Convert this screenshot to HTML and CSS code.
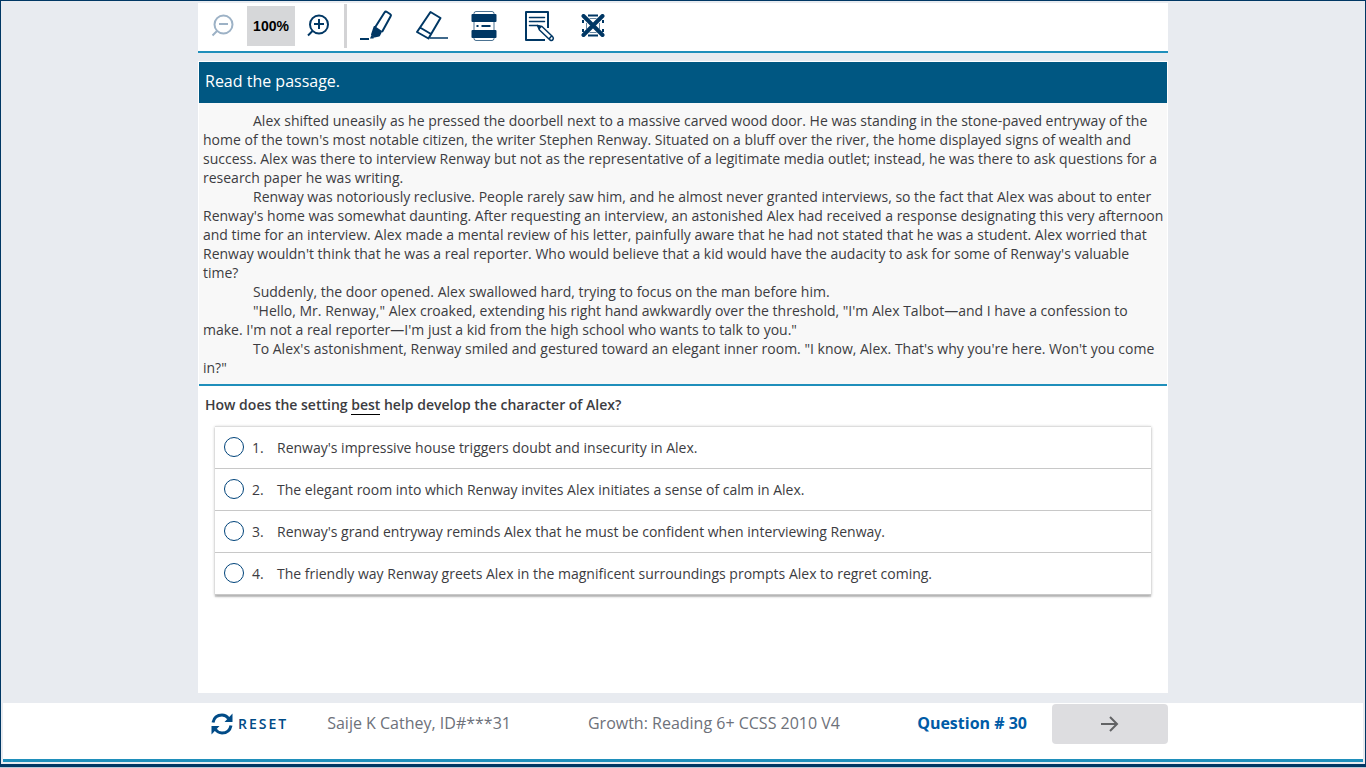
FILE: index.html
```html
<!DOCTYPE html>
<html lang="en">
<head>
<meta charset="utf-8">
<meta name="viewport" content="width=device-width, initial-scale=1">
<title>Growth: Reading 6+ CCSS 2010 V4</title>
<link rel="stylesheet" href="styles.css">
</head>
<body>
<div class="frame">
  <header class="toolbar column">
    <button class="tool zoom-out" type="button" aria-label="Zoom out" disabled>
      <svg width="24" height="24" viewBox="0 0 24 24" fill="none" stroke="currentColor" stroke-width="2"><circle cx="13.500" cy="10.500" r="9"/><path d="M9 10h9M7 17L2.500 21.500"/></svg>
    </button>
    <output class="zoom-level">100%</output>
    <button class="tool zoom-in" type="button" aria-label="Zoom in">
      <svg width="24" height="24" viewBox="0 0 24 24" fill="none" stroke="currentColor" stroke-width="2"><circle cx="13" cy="10.500" r="9"/><path d="M8 10h10M13 5v10M6.500 17L2 21.500"/></svg>
    </button>
    <span class="divider"></span>
    <button class="tool tool-wide" type="button" aria-label="Highlighter">
      <svg width="34" height="32" viewBox="0 0 34 32" fill="none" stroke="currentColor" stroke-width="2" stroke-linejoin="round"><path d="M16 17.500L25.500 2.500Q26.500 1 28 2l3 2q1.500 1 .5 2.500L23 22"/><path d="M15.500 17l6.500 4.500-2 4-4.500 1-2.500-2z" fill="currentColor"/><path d="M12.500 25l2.500 2-.5 1.500h-3.500z" fill="currentColor" stroke="none"/><path d="M1 29h9"/></svg>
    </button>
    <button class="tool tool-wide" type="button" aria-label="Eraser">
      <svg width="34" height="32" viewBox="0 0 34 32" fill="none" stroke="currentColor" stroke-width="2" stroke-linejoin="round"><path d="M15.500 2l10 6L13.500 28.500 2 22zM5 17.500l11 6.500"/><path d="M15 28h18" stroke-width="1.500"/></svg>
    </button>
    <button class="tool tool-guide" type="button" aria-label="Line reader">
      <svg width="26" height="32" viewBox="0 0 26 32"><rect x="3" y="1.500" width="20" height="29" rx="2" fill="none" stroke="currentColor" opacity=".7"/><rect x="0.500" y="4" width="25" height="8" rx="1" fill="currentColor"/><rect x="0.500" y="20" width="25" height="8" rx="1" fill="currentColor"/><path d="M10.500 16h9M5.500 16h2" stroke="currentColor" stroke-width="2"/></svg>
    </button>
    <button class="tool tool-notes" type="button" aria-label="Notepad">
      <svg width="32" height="32" viewBox="0 0 32 32" fill="none" stroke="currentColor" stroke-width="2" stroke-linejoin="round"><path d="M25 18V2H3v28h19"/><path d="M6.500 7.500h15M6.500 11.500h15M6.500 15.500h8" stroke-width="1.500" stroke-linecap="round"/><path d="M14.500 15.500l4.500 1 10.500 10q1.500 1.500.5 3t-3 .5L16.500 20zM26 29l3-3.500" stroke-width="1.500"/><path d="M14 15l5 1.500-3 3.500z" fill="currentColor" stroke="none"/></svg>
    </button>
    <button class="tool" type="button" aria-label="Answer eliminator">
      <svg width="24" height="24" viewBox="0 0 24 24" fill="none" stroke="currentColor"><path d="M7 1.500h10M7 21.500h10M2 6v3M2 15v3M22 6v3M22 15v3" stroke-width="2"/><path d="M8.500 4.500h7M8.500 18.500h7M5.500 9v6M18.500 9v6" opacity=".6"/><path d="M2.500 2l19 19M21.500 2l-19 19" stroke-width="4" stroke-linecap="round"/></svg>
    </button>
  </header>

  <main class="panel column">
    <h1 class="panel-title">Read the passage.</h1>
    <article class="passage">
      <p>Alex shifted uneasily as he pressed the doorbell next to a massive carved wood door. He was standing in the stone-paved entryway of the home of the town's most notable citizen, the writer Stephen Renway. Situated on a bluff over the river, the home displayed signs of wealth and success. Alex was there to interview Renway but not as the representative of a legitimate media outlet; instead, he was there to ask questions for a research paper he was writing.</p>
      <p>Renway was notoriously reclusive. People rarely saw him, and he almost never granted interviews, so the fact that Alex was about to enter Renway's home was somewhat daunting. After requesting an interview, an astonished Alex had received a response designating this very afternoon and time for an interview. Alex made a mental review of his letter, painfully aware that he had not stated that he was a student. Alex worried that Renway wouldn't think that he was a real reporter. Who would believe that a kid would have the audacity to ask for some of Renway's valuable time?</p>
      <p>Suddenly, the door opened. Alex swallowed hard, trying to focus on the man before him.</p>
      <p>"Hello, Mr. Renway," Alex croaked, extending his right hand awkwardly over the threshold, "I'm Alex Talbot—and I have a confession to make. I'm not a real reporter—I'm just a kid from the high school who wants to talk to you."</p>
      <p>To Alex's astonishment, Renway smiled and gestured toward an elegant inner room. "I know, Alex. That's why you're here. Won't you come in?"</p>
    </article>
    <fieldset class="question">
      <legend class="question-text">How does the setting <span class="underlined">best</span> help develop the character of Alex?</legend>
      <div class="answers">
        <label class="answer"><input class="answer-radio" type="radio" name="answer"><span class="answer-number">1.</span><span>Renway's impressive house triggers doubt and insecurity in Alex.</span></label>
        <label class="answer"><input class="answer-radio" type="radio" name="answer"><span class="answer-number">2.</span><span>The elegant room into which Renway invites Alex initiates a sense of calm in Alex.</span></label>
        <label class="answer"><input class="answer-radio" type="radio" name="answer"><span class="answer-number">3.</span><span>Renway's grand entryway reminds Alex that he must be confident when interviewing Renway.</span></label>
        <label class="answer"><input class="answer-radio" type="radio" name="answer"><span class="answer-number">4.</span><span>The friendly way Renway greets Alex in the magnificent surroundings prompts Alex to regret coming.</span></label>
      </div>
    </fieldset>
  </main>

  <footer class="footer">
    <div class="footer-row column">
      <button class="reset" type="button">
        <svg width="22" height="22" viewBox="0 0 22 22" fill="none" stroke="currentColor" stroke-width="3"><path d="M2 9.500C3 4.500 6.500 2 11 2q4 0 6.500 3.500M20 12.500C19 17.500 15.500 20 11 20q-4 0-6.500-3.500"/><path d="M21.500 0.500V9h-8zM.5 21.500V13h8z" fill="currentColor" stroke="none"/></svg>
        <span class="footer-text">RESET</span>
      </button>
      <span class="footer-text student">Saije K Cathey, ID#***31</span>
      <span class="footer-text test-name">Growth: Reading 6+ CCSS 2010 V4</span>
      <strong class="footer-text question-number">Question # 30</strong>
      <button class="next" type="button" aria-label="Next question">
        <svg width="20" height="18" viewBox="0 0 20 18" fill="none" stroke="currentColor" stroke-width="2"><path d="M1 9h16M10 2l7 7-7 7"/></svg>
      </button>
    </div>
  </footer>
</div>
</body>
</html>
```

FILE: styles.css
```css
* { box-sizing: border-box; }

body {
  margin: 0;
  background: #b9c8d8;
  color: #3c3c41;
  font-family: "Open Sans", "Noto Sans", sans-serif;
  font-size: 14px;
  line-height: 19px;
}

button {
  border: 0;
  padding: 0;
  background: none;
  color: #003764;
  font: inherit;
}

svg { display: block; }
p { margin: 0; }

.frame {
  display: flex;
  flex-direction: column;
  min-height: calc(100vh - 1px);
  padding: 2px;
  border: 1px solid #003764;
  border-bottom-width: 3px;
  background: #e8ebf0;
}

.column {
  width: 100%;
  max-width: 970px;
  margin-inline: auto;
}

.toolbar {
  display: flex;
  align-items: center;
  height: 50px;
  padding: 0 12px 2px;
  border-bottom: 2px solid #1f8fbb;
  background: #fff;
}

.tool { flex: none; }
.zoom-out { color: #9db2c6; }
.zoom-level {
  width: 48px;
  margin: 0 11px 0 13px;
  padding: 10px 0;
  background: #d6d7d9;
  color: #000;
  font-family: "Liberation Sans", Arial, sans-serif;
  font-weight: 700;
  line-height: 20px;
  text-align: center;
}
.divider {
  width: 3px;
  height: 44px;
  margin: 0 12px 0 14px;
  background: #d3d3d5;
}
.tool-wide { margin-right: 22px; }
.tool-guide,
.tool-notes { margin-right: 26px; }

.panel {
  flex: 1;
  margin-top: 8px;
  margin-bottom: 10px;
  padding: 1px;
  background: #fff;
}
.panel-title {
  margin: 0;
  padding: 7px 6px 10px;
  background: #005782;
  color: #fff;
  font-size: 16px;
  font-weight: 400;
  line-height: 24px;
}
.passage {
  padding: 8px 3px 7px 4px;
  border-bottom: 2px solid #1f8fbb;
  background: #f8f8f8;
}
.passage p { text-indent: 50px; }

.question {
  min-width: 0;
  margin: 0;
  padding: 0;
  border: 0;
}
.question-text {
  padding: 9px 6px 12px;
  font-weight: 600;
}
.underlined { border-bottom: 1px solid #000; }
.answers {
  margin: 0 16px;
  border-top: 1px solid #ddd;
  box-shadow: 0 1px 3px rgb(0 0 0 / 30%), 0 2px 1px rgb(0 0 0 / 12%);
}
.answer {
  display: flex;
  align-items: center;
  height: 42px;
  padding-left: 9px;
  border-bottom: 1px solid #c8c8c8;
}
.answer-radio {
  appearance: none;
  width: 20px;
  height: 20px;
  margin: 0 8px 2px 0;
  border: 1px solid #00437a;
  border-radius: 50%;
}
.answer-number { width: 25px; }

.footer {
  border-bottom: 3px solid #1f8fbb;
  background: #fff;
}
.footer-row {
  display: flex;
  align-items: center;
  height: 56px;
  padding-bottom: 14px;
  color: #6d717a;
  font-size: 16px;
}
.footer-text { padding-bottom: 2px; }
.reset {
  display: flex;
  align-items: center;
  gap: 5px;
  margin-left: 13px;
  color: #004b87;
  font-size: 14px;
  font-weight: 600;
  letter-spacing: 2px;
}
.student { margin-left: 39px; }
.test-name { margin-left: 77px; }
.question-number {
  margin-left: auto;
  color: #005ba6;
}
.next {
  display: grid;
  place-items: center;
  width: 116px;
  height: 40px;
  margin-left: 25px;
  border-radius: 4px;
  background: #dddde0;
  color: #626365;
}
```
